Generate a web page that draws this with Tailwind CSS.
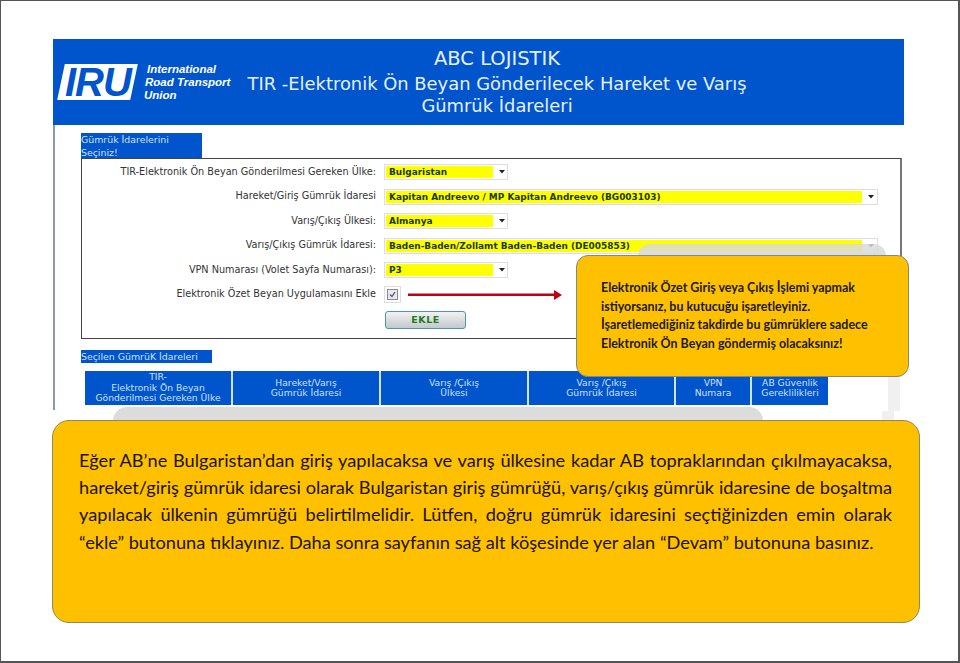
<!DOCTYPE html>
<html lang="tr">
<head>
    <meta charset="UTF-8">
    <title>TIR - Elektronik Ön Beyan</title>
    <script src="https://cdn.jsdelivr.net/npm/@tailwindcss/browser@4"></script>
</head>
<body class="bg-white">
<div class="relative w-[960px] h-[663px] overflow-hidden bg-white border-t border-l border-[#555] border-r-2 border-b-2 pt-[38px] pl-[52px] font-['DejaVu_Sans',sans-serif]">

    <!-- captura de la aplicacion -->
    <div class="w-[849px] h-[371px] border-l-2 border-[#8a9aa8]">
        <!-- cabecera -->
        <div class="-ml-[2px] w-[851px] h-[86px] bg-[#0055cc] flex text-[#e6f0fb]">
            <div class="w-[190px] pl-[6px] pt-[25px] flex gap-[10px] shrink-0">
                <div class="w-[73px] h-[36px] ml-[2px] bg-white -skew-x-12 flex items-center justify-center shrink-0">
                    <span class="skew-x-12 font-['Liberation_Sans',sans-serif] font-bold italic text-[40px] leading-none tracking-[-1px] text-[#0055cc]">IRU</span>
                </div>
                <div class="font-['Liberation_Sans',sans-serif] font-bold italic text-[11.5px] leading-[13px] -mt-[1px] text-white whitespace-nowrap">
                    <div class="pl-[3px]">International</div>
                    <div class="pl-[1px]">Road Transport</div>
                    <div>Union</div>
                </div>
            </div>
            <div class="w-[510px] ml-[-1px] text-center whitespace-nowrap pt-[8px]">
                <div class="text-[19.5px] leading-[23px]">ABC LOJISTIK</div>
                <div class="text-[17.9px] leading-[27px]">TIR -Elektronik Ön Beyan Gönderilecek Hareket ve Varış</div>
                <div class="text-[17.9px] leading-[17px]">Gümrük İdareleri</div>
            </div>
        </div>

        <!-- form -->
        <div class="pl-[26px] pt-[8px]">
            <div class="w-[121px] h-[25px] bg-[#0055cc] text-[#cfe0f5] text-[9.4px] leading-[13px]">Gümrük İdarelerini<br>Seçiniz!</div>
            <div class="w-[821px] h-[181px] border border-[#444] border-r-2 border-r-[#777] pt-[1px] text-[9.7px] text-[#333]">
                <div class="grid grid-cols-[294px_1fr] gap-x-[8px] items-center auto-rows-[24.5px]">
                    <div class="text-right whitespace-nowrap">TIR-Elektronik Ön Beyan Gönderilmesi Gereken Ülke:</div>
                    <div class="w-[124px] h-[16px] bg-white border border-[#ddd] flex items-center pl-px"><div class="w-[107px] h-[12px] bg-[#ffff00] text-[8.95px] leading-[12px] font-bold text-[#1a3a1a] pl-[3px]">Bulgaristan</div><svg class="ml-[6px]" width="6" height="4" viewBox="0 0 6 4"><path d="M0 0h6L3 3.5z" fill="#222"/></svg></div>

                    <div class="text-right whitespace-nowrap">Hareket/Giriş Gümrük İdaresi</div>
                    <div class="w-[494px] h-[16px] bg-white border border-[#ddd] flex items-center pl-px"><div class="w-[476px] h-[12px] bg-[#ffff00] text-[8.95px] leading-[12px] font-bold text-[#1a3a1a] pl-[3px] whitespace-nowrap">Kapitan Andreevo / MP Kapitan Andreevo (BG003103)</div><svg class="ml-[6px]" width="6" height="4" viewBox="0 0 6 4"><path d="M0 0h6L3 3.5z" fill="#222"/></svg></div>

                    <div class="text-right whitespace-nowrap">Varış/Çıkış Ülkesi:</div>
                    <div class="w-[124px] h-[16px] bg-white border border-[#ddd] flex items-center pl-px"><div class="w-[107px] h-[12px] bg-[#ffff00] text-[8.95px] leading-[12px] font-bold text-[#1a3a1a] pl-[3px]">Almanya</div><svg class="ml-[6px]" width="6" height="4" viewBox="0 0 6 4"><path d="M0 0h6L3 3.5z" fill="#222"/></svg></div>

                    <div class="text-right whitespace-nowrap">Varış/Çıkış Gümrük İdaresi:</div>
                    <div class="w-[494px] h-[16px] bg-white border border-[#ddd] flex items-center pl-px"><div class="w-[476px] h-[12px] bg-[#ffff00] text-[8.95px] leading-[12px] font-bold text-[#1a3a1a] pl-[3px] whitespace-nowrap">Baden-Baden/Zollamt Baden-Baden (DE005853)</div><svg class="ml-[6px]" width="6" height="4" viewBox="0 0 6 4"><path d="M0 0h6L3 3.5z" fill="#222"/></svg></div>

                    <div class="text-right whitespace-nowrap">VPN Numarası (Volet Sayfa Numarası):</div>
                    <div class="w-[124px] h-[16px] bg-white border border-[#ddd] flex items-center pl-px"><div class="w-[107px] h-[12px] bg-[#ffff00] text-[8.95px] leading-[12px] font-bold text-[#1a3a1a] pl-[3px]">P3</div><svg class="ml-[6px]" width="6" height="4" viewBox="0 0 6 4"><path d="M0 0h6L3 3.5z" fill="#222"/></svg></div>

                    <div class="text-right whitespace-nowrap">Elektronik Özet Beyan Uygulamasını Ekle</div>
                    <div class="flex items-center">
                        <div class="w-[17px] h-[17px] border border-[#ddd] flex items-center justify-center">
                            <svg width="11" height="11" viewBox="0 0 11 11"><rect x="0.5" y="0.5" width="10" height="10" fill="#e8e8ee" stroke="#8a8a9a"/><path d="M3 5.5l2 2 3-4.5" fill="none" stroke="#556" stroke-width="1.3"/></svg>
                        </div>
                        <svg class="ml-[7px]" width="154" height="12" viewBox="0 0 154 12"><rect x="0" y="4.5" width="146" height="2.5" fill="#c00010"/><path d="M146 1l8 5-8 5z" fill="#c00010"/></svg>
                    </div>
                </div>
                <div class="ml-[303px] mt-[4px] w-[81px] h-[18px] rounded-[3px] border border-[#4f97a8] bg-gradient-to-b from-[#f2f2f2] to-[#c4c8cc] text-center text-[9.5px] leading-[16px] font-bold tracking-[0.5px] text-[#1f7a1f]">EKLE</div>
            </div>

            <div class="w-[131px] h-[13px] mt-[11px] bg-[#0055cc] text-[#cfe0f5] text-[9.4px] leading-[13px] whitespace-nowrap">Seçilen GümrüK İdareleri</div>

            <!-- tablo -->
            <div class="ml-[4px] mt-[8px] w-[743px] h-[34px] flex gap-[2px] bg-[#cfe3f2] text-[#cfe0f5] text-[9.2px] leading-[10.5px] text-center whitespace-nowrap">
                <div class="w-[146px] bg-[#0055cc] flex items-center justify-center">TIR-<br>Elektronik Ön Beyan<br>Gönderilmesi Gereken Ülke</div>
                <div class="w-[146px] bg-[#0055cc] flex items-center justify-center">Hareket/Varış<br>Gümrük İdaresi</div>
                <div class="w-[146px] bg-[#0055cc] flex items-center justify-center">Varış /Çıkış<br>Ülkesi</div>
                <div class="w-[145px] bg-[#0055cc] flex items-center justify-center">Varış /Çıkış<br>Gümrük İdaresi</div>
                <div class="w-[74px] bg-[#0055cc] flex items-center justify-center">VPN<br>Numara</div>
                <div class="w-[76px] bg-[#0055cc] flex items-center justify-center">AB Güvenlik<br>Gereklilikleri</div>
            </div>
        </div>
    </div>

    <!-- sombras grises detras de los globos -->
    <div class="absolute left-[637px] top-[243px] w-[248px] h-[40px] rounded-t-[12px] bg-[#d9d9d9]/85"></div>
    <div class="absolute left-[887px] top-[376px] w-[12px] h-[34px] bg-[#f0f0f0]"></div>
    <div class="absolute left-[881px] top-[410px] w-[12px] h-[10px] bg-[#f0f0f0]"></div>
    <div class="absolute left-[112px] top-[406px] w-[650px] h-[30px] rounded-t-[14px] bg-[#dcdcdc]"></div>

    <!-- globo pequeno -->
    <div class="absolute left-[575px] top-[254px] w-[333px] h-[122px] rounded-[12px] bg-[#ffc000] border border-[#7f8a80] pl-[24px] pt-[23px] font-['Lato',sans-serif] font-bold text-[12.45px] leading-[18.7px] text-[#1a1a1a] whitespace-nowrap">
        Elektronik Özet Giriş veya Çıkış İşlemi yapmak<br>
        istiyorsanız, bu kutucuğu işaretleyiniz.<br>
        İşaretlemediğiniz takdirde bu gümrüklere sadece<br>
        Elektronik Ön Beyan göndermiş olacaksınız!
    </div>

    <!-- globo grande -->
    <div class="absolute left-[51px] top-[419px] w-[868px] h-[203px] rounded-[17px] bg-[#ffc000] border border-[#8a8a60] pl-[26px] pr-[27px] pt-[26px] font-['Lato',sans-serif] text-[18.2px] leading-[27.2px] text-[#1a1200] text-justify">
        Eğer AB’ne Bulgaristan’dan giriş yapılacaksa ve varış ülkesine kadar AB topraklarından çıkılmayacaksa, hareket/giriş gümrük idaresi olarak Bulgaristan giriş gümrüğü, varış/çıkış gümrük idaresine de boşaltma yapılacak ülkenin gümrüğü belirtilmelidir. Lütfen, doğru gümrük idaresini seçtiğinizden emin olarak “ekle” butonuna tıklayınız. Daha sonra sayfanın sağ alt köşesinde yer alan “Devam” butonuna basınız.
    </div>
</div>
</body>
</html>
